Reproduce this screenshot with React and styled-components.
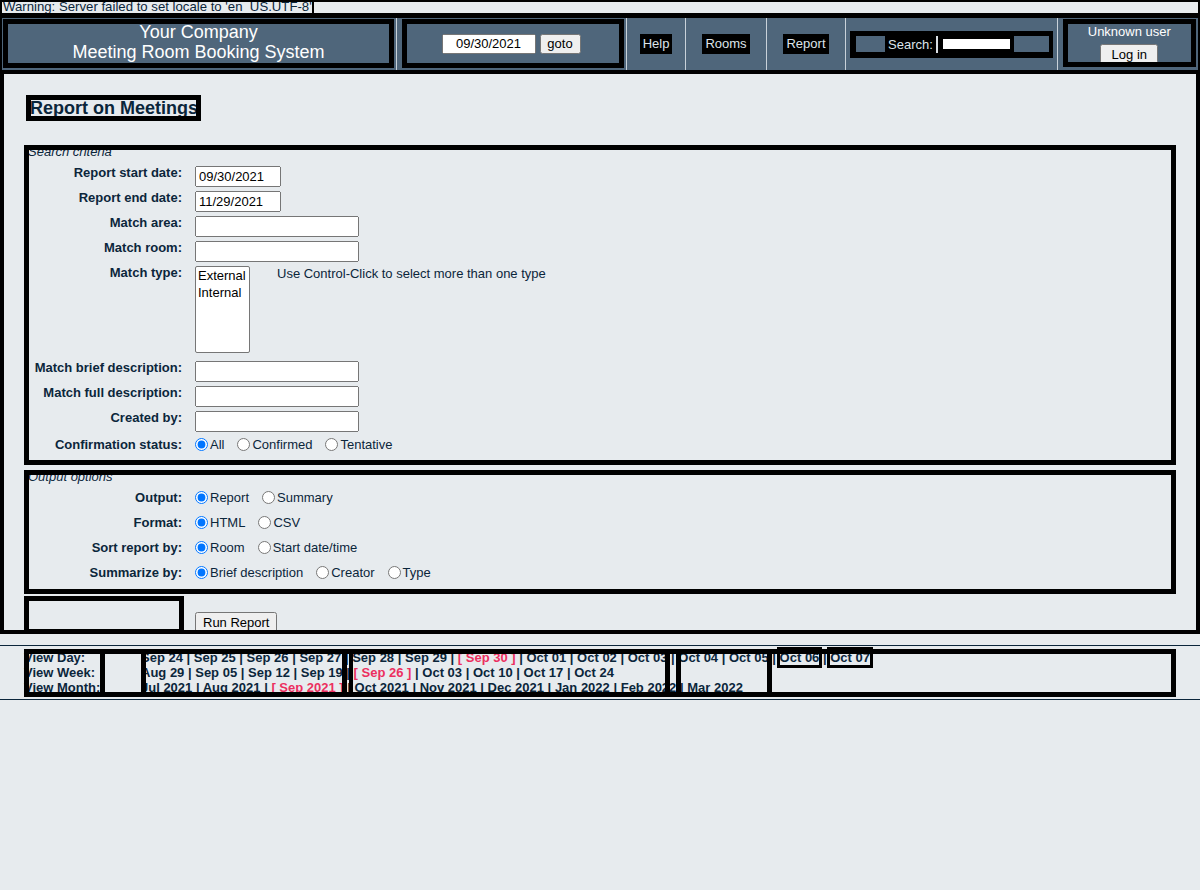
import React from 'react';
import styled, { createGlobalStyle } from 'styled-components';

const NAVY = '#0b263b';
const SLATE = '#4f667b';
const BG = '#e7ebee';
const RED = '#ec2f5f';
const FONT = '"Liberation Sans", Arial, sans-serif';

const GlobalStyle = createGlobalStyle`
  html, body { margin: 0; padding: 0; }
  body {
    background: ${BG};
    font-family: ${FONT};
    font-size: 13px;
    color: ${NAVY};
  }
  *, *::before, *::after { box-sizing: border-box; }
  input, button, select { font-family: ${FONT}; font-size: 13px; }
`;

const Page = styled.div`
  outline: 2px solid #000;
  outline-offset: -2px;
`;

const Warning = styled.div`
  height: 13px;
  line-height: 14px;
  font-size: 13.2px;
  padding-left: 3px;
  white-space: nowrap;
  overflow: hidden;
  color: ${NAVY};
`;

const WarnMark = styled.span`
  display: inline-block;
  width: 2px;
  height: 12px;
  margin-top: 1px;
  vertical-align: top;
  background: #000;
`;

const Header = styled.header`
  display: flex;
  height: 57px;
  border-top: 5px solid #000;
  background: ${SLATE};
`;

const Cell = styled.div`
  flex: 0 0 ${p => p.$w}px;
  display: flex;
  align-items: ${p => (p.$stretch ? 'stretch' : 'center')};
  justify-content: center;
  border-left: ${p => (p.$sep ? '1px solid #c9d2da' : 'none')};
  padding: ${p => p.$pad || '0'};
`;

const OutlinedBox = styled.div`
  flex: 1;
  outline: 5px solid #000;
  outline-offset: -5px;
`;

const CompanyBox = styled(OutlinedBox)`
  display: flex;
  flex-direction: column;
  justify-content: center;
  padding-bottom: 3px;
  text-align: center;
  color: #fff;
  font-size: 18px;
  line-height: 20px;
`;

const DateBox = styled(OutlinedBox)`
  display: flex;
  align-items: center;
  justify-content: center;
  gap: 4px;
  padding-right: 4px;
`;

const HeaderDate = styled.input`
  width: 94px;
  height: 20px;
  text-align: center;
  color: #000;
`;

const SmallButton = styled.button`
  width: ${p => p.$w}px;
  height: 20px;
  padding: 0;
  color: #000;
`;

const NavLink = styled.span`
  display: inline-block;
  background: #000;
  color: #dde4ea;
  padding: 0 3px;
  line-height: 20px;
  font-size: 13px;
`;

const SearchBox = styled.div`
  flex: 1;
  height: 27px;
  background: #000;
  display: flex;
  align-items: center;
  padding: 0 4px 0 6px;
`;

const SlateBlock = styled.div`
  width: ${p => p.$w}px;
  height: 16px;
  background: ${SLATE};
  margin-left: ${p => p.$ml || 0}px;
  flex: none;
`;

const SearchLabel = styled.span`
  color: #dde4ea;
  margin-left: 3px;
`;

const SearchRule = styled.div`
  width: 2px;
  height: 17px;
  background: #d9dee3;
  margin-left: 3px;
`;

const SearchField = styled.div`
  width: 67px;
  height: 10px;
  background: #fff;
  margin-left: 5px;
`;

const UserBox = styled(OutlinedBox)`
  display: flex;
  flex-direction: column;
  align-items: center;
  padding-top: 5px;
  color: #fff;
  line-height: 15px;
  overflow: hidden;
`;

const LoginButton = styled(SmallButton)`
  margin-top: 5px;
  flex: none;
`;

const Main = styled.main`
  outline: 4px solid #000;
  outline-offset: -4px;
  padding: 25px 24px 0;
`;

const Title = styled.h2`
  width: fit-content;
  margin: 0 0 27px 2px;
  padding: 0 3px 0 4px;
  outline: 5px solid #000;
  outline-offset: -5px;
  font-size: 18px;
  font-weight: bold;
  line-height: 26px;
  color: ${NAVY};
`;

const Fieldset = styled.section`
  outline: 5px solid #000;
  outline-offset: -5px;
  margin-top: ${p => p.$mt || 0}px;
  padding-bottom: ${p => p.$pb}px;
`;

const Legend = styled.div`
  font-style: italic;
  font-size: 13px;
  line-height: 13px;
  height: 13px;
  margin-top: -3px;
  padding-left: 4px;
  white-space: nowrap;
`;

const Rows = styled.div`
  display: flex;
  flex-direction: column;
  gap: 4px;
  margin-top: ${p => p.$mt}px;
`;

const Row = styled.div`
  display: grid;
  grid-template-columns: 158px 1fr;
  column-gap: 13px;
  align-items: ${p => (p.$center ? 'center' : 'start')};
  min-height: ${p => p.$h || 0}px;
`;

const Label = styled.label`
  font-weight: bold;
  text-align: right;
  line-height: 14px;
  white-space: nowrap;
`;

const TextInput = styled.input`
  width: ${p => p.$w}px;
  height: 21px;
  color: #000;
`;

const TypeControl = styled.div`
  display: flex;
  align-items: flex-start;
`;

const TypeSelect = styled.select`
  width: 55px;
  height: 87px;
  margin-bottom: 4px;
  color: #000;
  option { font-size: 13px; padding: 1px 2px; }
`;

const Note = styled.span`
  margin-left: 27px;
  line-height: 15px;
`;

const Radios = styled.div`
  display: flex;
  align-items: center;
`;

const RadioOption = styled.label`
  display: inline-flex;
  align-items: center;
  margin-right: 13px;
  line-height: 15px;
  white-space: nowrap;
`;

const Radio = styled.input`
  width: 13px;
  height: 13px;
  margin: 0 2px 0 0;
`;

const SubmitRow = styled.div`
  display: flex;
  height: 38px;
  margin-top: 2px;
`;

const SubmitLabel = styled.div`
  width: 160px;
  flex: none;
  outline: 5px solid #000;
  outline-offset: -5px;
`;

const RunButton = styled.button`
  align-self: flex-start;
  margin: 16px 0 0 11px;
  height: 21px;
  padding: 1px 6px;
  color: #000;
`;

const Footer = styled.footer`
  margin-top: 11px;
  border-top: 1px solid ${NAVY};
  border-bottom: 1px solid ${NAVY};
  padding: 3px 24px 2px;
`;

const NavBox = styled.nav`
  position: relative;
  height: 48px;
  display: flex;
  padding-top: 1px;
  outline: 5px solid #000;
  outline-offset: -5px;
  font-weight: bold;
  line-height: 15px;
  white-space: nowrap;
`;

const LabelCol = styled.div`
  flex: 0 0 117px;
  display: flex;
  flex-direction: column;
`;

const LinksCol = styled.div`
  display: flex;
  flex-direction: column;
`;

const Current = styled.span`
  color: ${RED};
`;

const Boxed = styled.span`
  outline: 3px solid #000;
`;

const Bar = styled.div`
  position: absolute;
  top: 0;
  bottom: 0;
  left: ${p => p.$x}px;
  width: ${p => p.$w}px;
  background: #000;
`;

function LinkLine({ items }) {
  return (
    <div>
      {items.map((it, i) => {
        const sep = i > 0 ? ' | ' : '';
        let node = it.t;
        if (it.cur) node = <Current>[ {it.t} ]</Current>;
        else if (it.box) node = <Boxed>{it.t}</Boxed>;
        return (
          <React.Fragment key={i}>
            {sep}
            {node}
          </React.Fragment>
        );
      })}
    </div>
  );
}

const days = [
  { t: 'Sep 24' }, { t: 'Sep 25' }, { t: 'Sep 26' }, { t: 'Sep 27' }, { t: 'Sep 28' },
  { t: 'Sep 29' }, { t: 'Sep 30', cur: true }, { t: 'Oct 01' }, { t: 'Oct 02' },
  { t: 'Oct 03' }, { t: 'Oct 04' }, { t: 'Oct 05' }, { t: 'Oct 06', box: true }, { t: 'Oct 07', box: true },
];
const weeks = [
  { t: 'Aug 29' }, { t: 'Sep 05' }, { t: 'Sep 12' }, { t: 'Sep 19' }, { t: 'Sep 26', cur: true },
  { t: 'Oct 03' }, { t: 'Oct 10' }, { t: 'Oct 17' }, { t: 'Oct 24' },
];
const months = [
  { t: 'Jul 2021' }, { t: 'Aug 2021' }, { t: 'Sep 2021', cur: true }, { t: 'Oct 2021' },
  { t: 'Nov 2021' }, { t: 'Dec 2021' }, { t: 'Jan 2022' }, { t: 'Feb 2022' }, { t: 'Mar 2022' },
];

const bars = [
  [76, 5], [117, 5], [318, 5], [325, 4], [641, 5], [652, 5], [743, 5],
];

function RadioGroup({ name, options }) {
  return (
    <Radios>
      {options.map((o, i) => (
        <RadioOption key={o}>
          <Radio type="radio" name={name} defaultChecked={i === 0} />
          {o}
        </RadioOption>
      ))}
    </Radios>
  );
}

export default function App() {
  return (
    <>
      <GlobalStyle />
      <Page>
        <Warning>
          Warning: Server failed to set locale to 'en_US.UTF-8'
          <WarnMark />
        </Warning>
        <Header>
          <Cell $w={396} $stretch $pad="1px 2px 2px 3px">
            <CompanyBox>
              <div>Your Company</div>
              <div>Meeting Room Booking System</div>
            </CompanyBox>
          </Cell>
          <Cell $w={230} $sep $stretch $pad="1px 2px 2px 5px">
            <DateBox>
              <HeaderDate type="text" defaultValue="09/30/2021" />
              <SmallButton $w={41}>goto</SmallButton>
            </DateBox>
          </Cell>
          <Cell $w={59} $sep>
            <NavLink>Help</NavLink>
          </Cell>
          <Cell $w={81} $sep>
            <NavLink>Rooms</NavLink>
          </Cell>
          <Cell $w={79} $sep>
            <NavLink>Report</NavLink>
          </Cell>
          <Cell $w={211} $sep $pad="0 4px">
            <SearchBox>
              <SlateBlock $w={29} />
              <SearchLabel>Search:</SearchLabel>
              <SearchRule />
              <SearchField />
              <SlateBlock $w={35} $ml={4} />
            </SearchBox>
          </Cell>
          <Cell $w={144} $sep $stretch $pad="1px 5px 3px 5px">
            <UserBox>
              <div>Unknown user</div>
              <LoginButton $w={58}>Log in</LoginButton>
            </UserBox>
          </Cell>
        </Header>
        <Main>
          <Title>Report on Meetings</Title>
          <Fieldset $pb={12}>
            <Legend>Search criteria</Legend>
            <Rows $mt={8}>
              <Row>
                <Label>Report start date:</Label>
                <TextInput $w={86} defaultValue="09/30/2021" />
              </Row>
              <Row>
                <Label>Report end date:</Label>
                <TextInput $w={86} defaultValue="11/29/2021" />
              </Row>
              <Row>
                <Label>Match area:</Label>
                <TextInput $w={164} />
              </Row>
              <Row>
                <Label>Match room:</Label>
                <TextInput $w={164} />
              </Row>
              <Row>
                <Label>Match type:</Label>
                <TypeControl>
                  <TypeSelect multiple size={5} defaultValue={[]}>
                    <option>External</option>
                    <option>Internal</option>
                  </TypeSelect>
                  <Note>Use Control-Click to select more than one type</Note>
                </TypeControl>
              </Row>
              <Row>
                <Label>Match brief description:</Label>
                <TextInput $w={164} />
              </Row>
              <Row>
                <Label>Match full description:</Label>
                <TextInput $w={164} />
              </Row>
              <Row>
                <Label>Created by:</Label>
                <TextInput $w={164} />
              </Row>
              <Row $center $h={17}>
                <Label>Confirmation status:</Label>
                <RadioGroup name="confirm" options={['All', 'Confirmed', 'Tentative']} />
              </Row>
            </Rows>
          </Fieldset>
          <Fieldset $mt={8} $pb={11}>
            <Legend>Output options</Legend>
            <Rows $mt={4}>
              <Row $center $h={21}>
                <Label>Output:</Label>
                <RadioGroup name="output" options={['Report', 'Summary']} />
              </Row>
              <Row $center $h={21}>
                <Label>Format:</Label>
                <RadioGroup name="format" options={['HTML', 'CSV']} />
              </Row>
              <Row $center $h={21}>
                <Label>Sort report by:</Label>
                <RadioGroup name="sort" options={['Room', 'Start date/time']} />
              </Row>
              <Row $center $h={21}>
                <Label>Summarize by:</Label>
                <RadioGroup name="summ" options={['Brief description', 'Creator', 'Type']} />
              </Row>
            </Rows>
          </Fieldset>
          <SubmitRow>
            <SubmitLabel />
            <RunButton>Run Report</RunButton>
          </SubmitRow>
        </Main>
      </Page>
      <Footer>
        <NavBox>
          <LabelCol>
            <div>View Day:</div>
            <div>View Week:</div>
            <div>View Month:</div>
          </LabelCol>
          <LinksCol>
            <LinkLine items={days} />
            <LinkLine items={weeks} />
            <LinkLine items={months} />
          </LinksCol>
          {bars.map(([x, w]) => (
            <Bar key={x} $x={x} $w={w} />
          ))}
        </NavBox>
      </Footer>
    </>
  );
}
